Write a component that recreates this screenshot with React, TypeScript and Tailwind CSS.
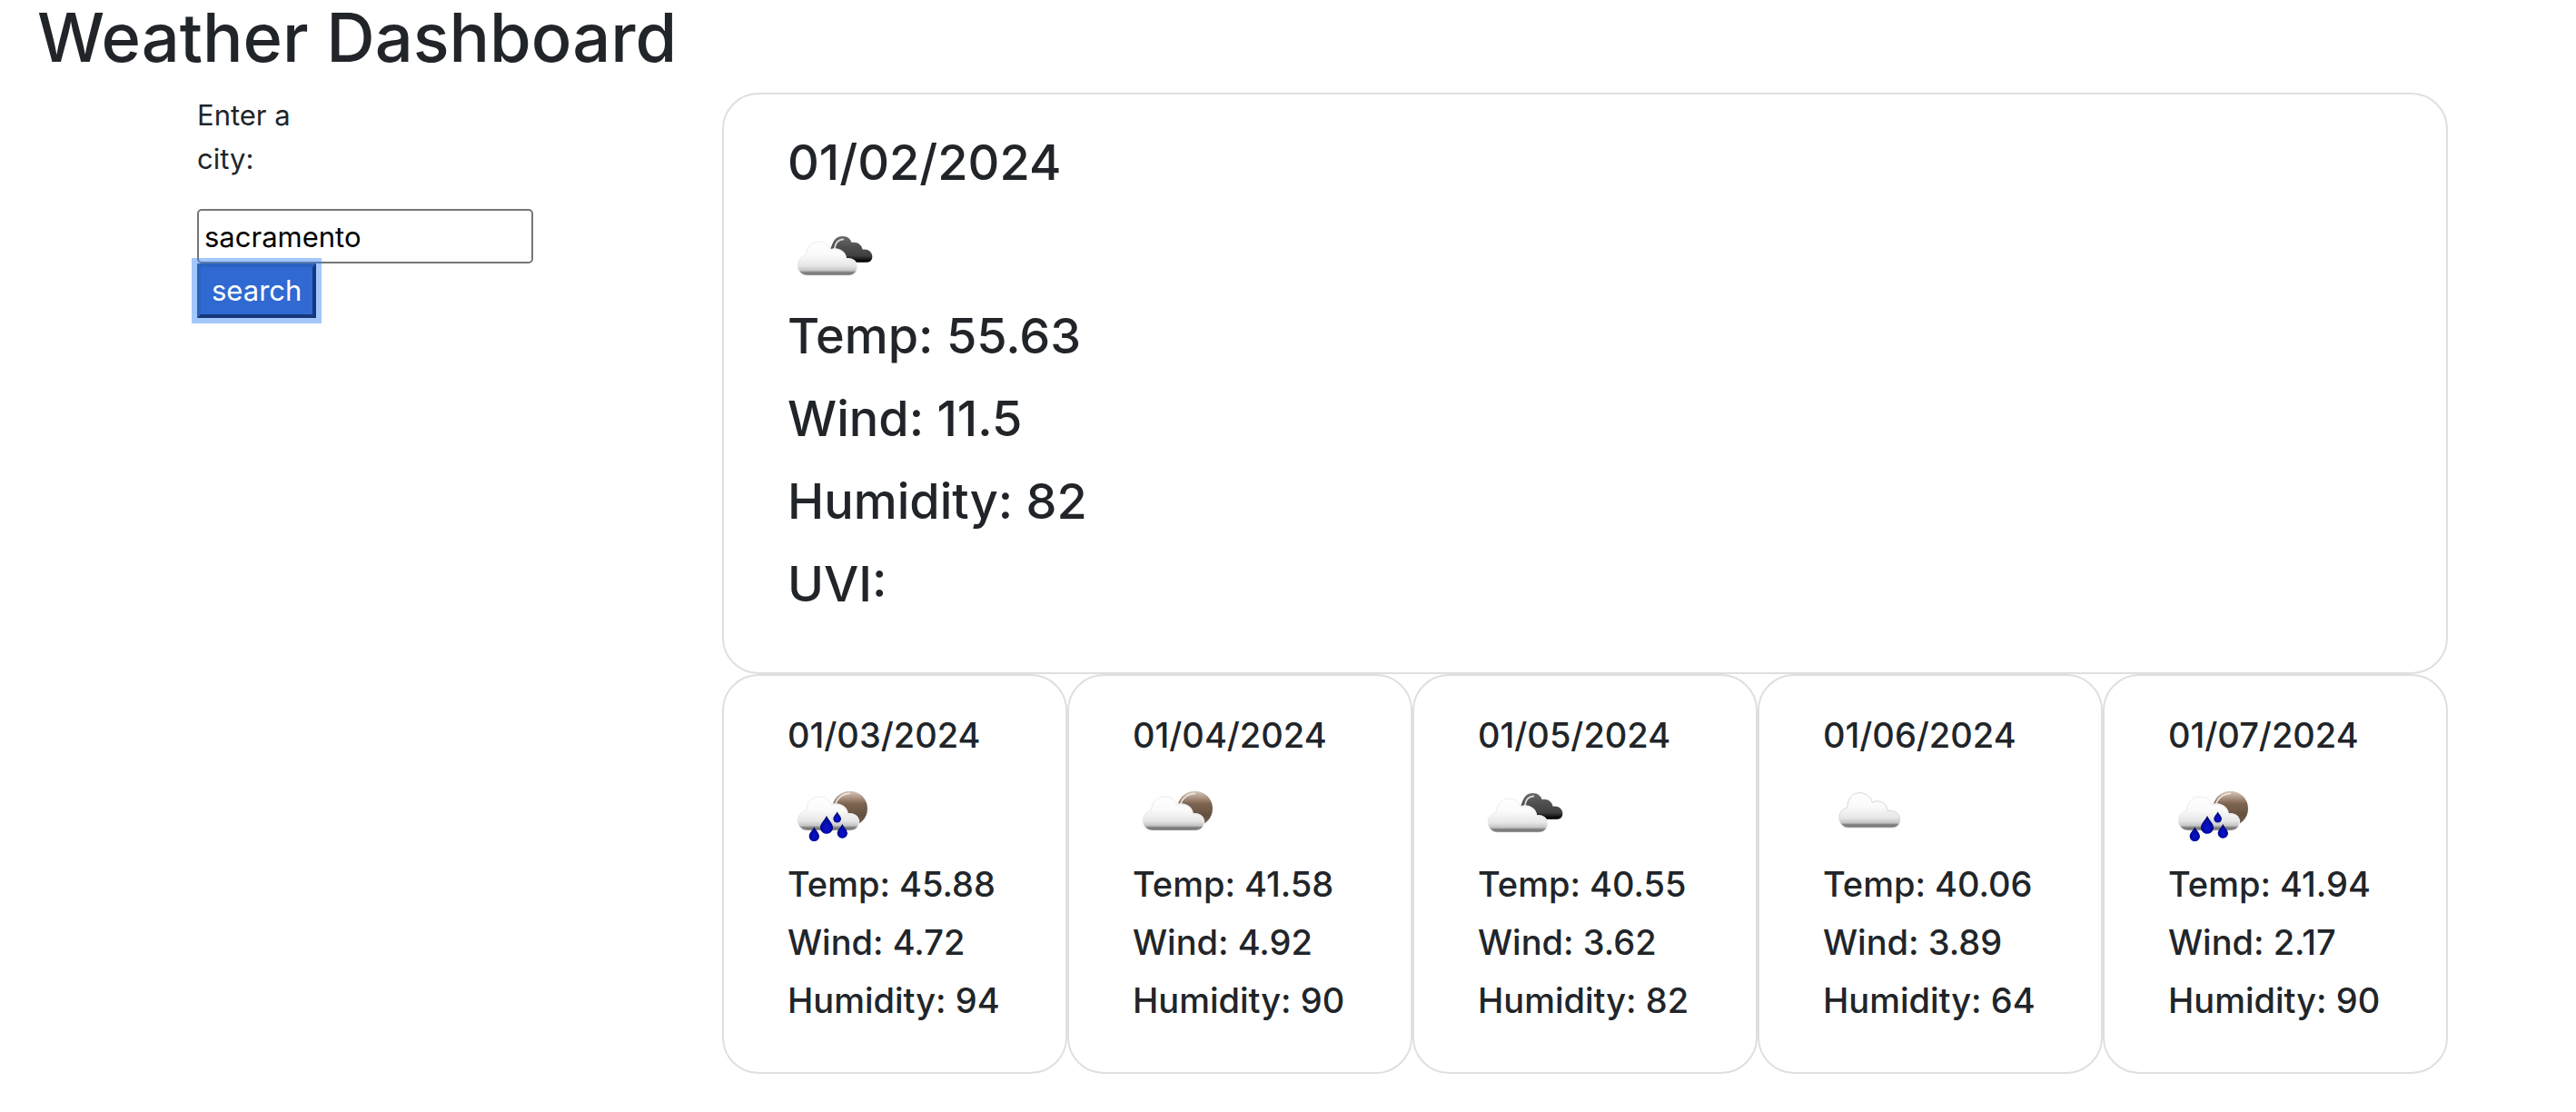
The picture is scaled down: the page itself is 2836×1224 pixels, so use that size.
import { useId, useState } from "react";

type Sky = "overcast" | "cloudy" | "moonCloud" | "moonRain";

interface Day {
  date: string;
  sky: Sky;
  temp: string;
  wind: string;
  humidity: string;
}

const today: Day = { date: "01/02/2024", sky: "overcast", temp: "55.63", wind: "11.5", humidity: "82" };

const forecast: Day[] = [
  { date: "01/03/2024", sky: "moonRain", temp: "45.88", wind: "4.72", humidity: "94" },
  { date: "01/04/2024", sky: "moonCloud", temp: "41.58", wind: "4.92", humidity: "90" },
  { date: "01/05/2024", sky: "overcast", temp: "40.55", wind: "3.62", humidity: "82" },
  { date: "01/06/2024", sky: "cloudy", temp: "40.06", wind: "3.89", humidity: "64" },
  { date: "01/07/2024", sky: "moonRain", temp: "41.94", wind: "2.17", humidity: "90" },
];

const skyNames: Record<Sky, string> = {
  overcast: "Broken clouds",
  cloudy: "Scattered clouds",
  moonCloud: "Few clouds",
  moonRain: "Rain",
};

const CLOUD =
  "M87 196 C67 196 55 182 55 163 C55 145 66 134 82 130 C83 103 101 85 123 85 C143 85 157 94 163 112 C187 103 214 119 214 142 C234 138 250 151 250 169 C250 185 240 196 223 196 Z";
const FLAT_CLOUD =
  "M105 181 C86 181 75 166 75 148 C75 131 86 118 101 115 C102 85 119 66 141 66 C162 66 178 78 184 98 C206 86 232 98 235 126 C257 122 275 134 275 154 C275 170 266 181 250 181 Z";
const DROP = "M0 -30 C4 -18 21 -5 21 9 C21 22 11 30 0 30 C-11 30 -21 22 -21 9 C-21 -5 -4 -18 0 -30 Z";

function SkyIcon({ sky }: { sky: Sky }) {
  const id = useId();
  const cloud = `${id}-cloud`;
  const moon = `${id}-moon`;
  const dark = `${id}-dark`;
  const drop = `${id}-drop`;
  const soft = `${id}-soft`;
  const hasMoon = sky === "moonCloud" || sky === "moonRain";
  return (
    <svg role="img" aria-label={skyNames[sky]} viewBox="21 -5 300 300" className="size-[100px]">
      <defs>
        <linearGradient id={cloud} x1="0" y1="0" x2="0" y2="1">
          <stop offset="0" stopColor="#ffffff" />
          <stop offset="0.4" stopColor="#fafafa" />
          <stop offset="0.72" stopColor="#e6e6e6" />
          <stop offset="0.86" stopColor="#c4c4c4" />
          <stop offset="0.91" stopColor="#858585" />
          <stop offset="1" stopColor="#6c6c6c" />
        </linearGradient>
        <linearGradient id={moon} x1="0" y1="0" x2="0" y2="1">
          <stop offset="0" stopColor="#d8c8bb" />
          <stop offset="0.22" stopColor="#a58c7a" />
          <stop offset="0.36" stopColor="#7d6451" />
          <stop offset="0.7" stopColor="#64503f" />
          <stop offset="1" stopColor="#7a6553" />
        </linearGradient>
        <linearGradient id={dark} x1="0" y1="0" x2="0" y2="1">
          <stop offset="0" stopColor="#6a6a6a" />
          <stop offset="0.35" stopColor="#525252" />
          <stop offset="0.75" stopColor="#404040" />
          <stop offset="0.92" stopColor="#0c0c0c" />
          <stop offset="1" stopColor="#000000" />
        </linearGradient>
        <radialGradient id={drop} cx="0.5" cy="0.65" r="0.5">
          <stop offset="0" stopColor="#0a14d0" />
          <stop offset="0.6" stopColor="#0509b0" />
          <stop offset="1" stopColor="#050670" />
        </radialGradient>
        <filter id={soft} x="-10%" y="-10%" width="120%" height="120%">
          <feGaussianBlur stdDeviation="2" />
        </filter>
      </defs>
      <g filter={`url(#${soft})`}>
        {hasMoon && (
          <>
            <circle cx="227" cy="118" r="58" fill={`url(#${moon})`} />
            <path d="M177 110 C183 84 203 68 228 68" fill="none" stroke="#eee6df" strokeWidth="5" />
          </>
        )}
        {sky === "overcast" && (
          <>
            <path
              d="M160 112 C170 104 168 67 203 67 C220 67 229 77 233 88 C251 84 266 95 269 111 C287 108 301 119 301 134 C301 146 294 153 283 153 L215 153 Z"
              fill={`url(#${dark})`}
            />
            <path d="M176 112 C178 88 189 77 207 77" fill="none" stroke="#d8d8d8" strokeWidth="5" />
          </>
        )}
        {sky === "cloudy" ? (
          <path d={FLAT_CLOUD} fill={`url(#${cloud})`} stroke="#d4d4d4" strokeWidth="3" />
        ) : (
          <g transform={hasMoon ? "translate(0 -6) translate(55 0) scale(1.03 1) translate(-55 0)" : undefined}>
            <path d={CLOUD} fill="none" stroke="#ffffff" strokeWidth="5" />
            <path d={CLOUD} fill={`url(#${cloud})`} stroke="#e2e2e2" strokeWidth="2" />
          </g>
        )}
        {sky === "moonRain" && (
          <g fill={`url(#${drop})`}>
            <path d={DROP} transform="translate(150 171)" />
            <path d={DROP} transform="translate(109 202) scale(0.8)" />
            <path d={DROP} transform="translate(202 192) scale(0.8)" />
            <path d={DROP} transform="translate(185 146) scale(0.62)" />
          </g>
        )}
      </g>
    </svg>
  );
}

function TodayCard({ day }: { day: Day }) {
  return (
    <article className="rounded-[40px] border-2 border-[#dfdfdf] px-[70px] pt-[41px] pb-10 text-[54px] leading-[67px] font-medium">
      <h2 className="mb-6">{day.date}</h2>
      <SkyIcon sky={day.sky} />
      <p className="mb-6">Temp: {day.temp}</p>
      <p className="mb-6">Wind: {day.wind}</p>
      <p className="mb-6">Humidity: {day.humidity}</p>
      <p className="mb-6">UVI:</p>
    </article>
  );
}

function ForecastCard({ day }: { day: Day }) {
  return (
    <article className="rounded-[40px] border-2 border-[#dfdfdf] pt-[41px] pr-4 pb-[39px] pl-[70px] text-[38px] leading-[48px] font-medium whitespace-nowrap">
      <h3 className="mb-4">{day.date}</h3>
      <SkyIcon sky={day.sky} />
      <p className="mb-4">Temp: {day.temp}</p>
      <p className="mb-4">Wind: {day.wind}</p>
      <p className="mb-4">Humidity: {day.humidity}</p>
    </article>
  );
}

export default function App() {
  const [city, setCity] = useState("sacramento");
  return (
    <div className="min-h-screen bg-white font-['Inter',sans-serif] text-[#212529]">
      <header className="pl-[41px]">
        <h1 className="mb-5 text-[74px] leading-[82px] font-medium">Weather Dashboard</h1>
      </header>
      <main className="mr-[141px] flex">
        <form className="w-[795px] shrink-0 pt-px pl-[217px] text-[31px]" onSubmit={(e) => e.preventDefault()}>
          <label htmlFor="city" className="mb-[31px] block w-[130px] leading-[48px]">
            Enter a city:
          </label>
          <input
            id="city"
            type="text"
            value={city}
            onChange={(e) => setCity(e.target.value)}
            className="block h-[60px] w-[370px] rounded-[5px] border-2 border-[#767676] bg-white px-[6px] text-black"
          />
          <button
            type="submit"
            className="relative block h-[60px] border-4 border-t-[#2b62c0] border-r-[#16387a] border-b-[#16387a] border-l-[#2b62c0] bg-[#2f69d1] px-3 text-white ring-6 ring-[rgba(50,130,247,0.45)]"
          >
            search
          </button>
        </form>
        <section className="min-w-0 flex-1">
          <TodayCard day={today} />
          <div className="grid grid-cols-5">
            {forecast.map((day) => (
              <ForecastCard key={day.date} day={day} />
            ))}
          </div>
        </section>
      </main>
    </div>
  );
}
